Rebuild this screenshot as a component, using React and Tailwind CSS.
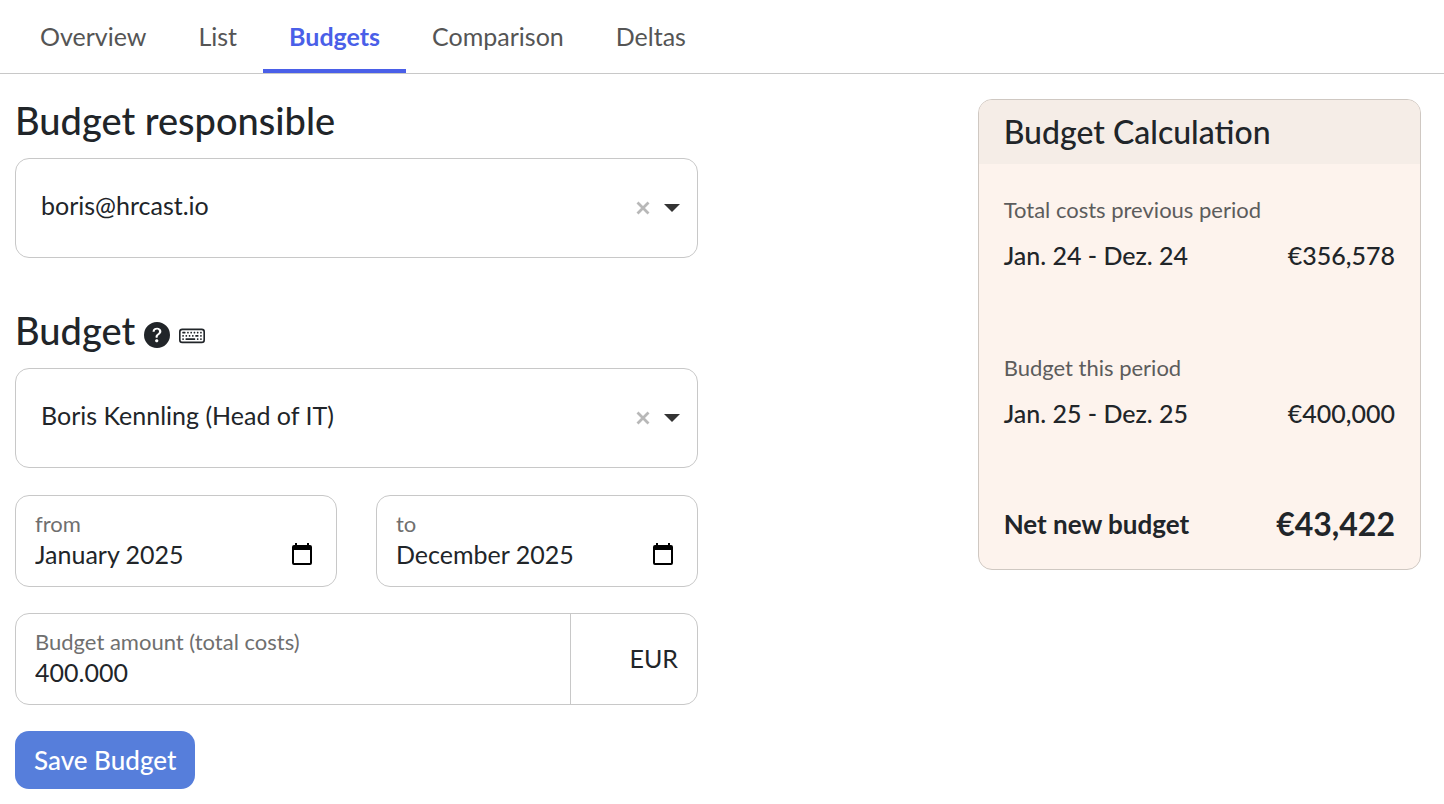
import { useState } from 'react';
import { BsQuestionCircleFill, BsKeyboard } from 'react-icons/bs';

const TABS = ['Overview', 'List', 'Budgets', 'Comparison', 'Deltas'];

const PERIODS = [
  { label: 'Total costs previous period', range: 'Jan. 24 - Dez. 24', amount: '€356,578' },
  { label: 'Budget this period', range: 'Jan. 25 - Dez. 25', amount: '€400,000' },
];

const NET_BUDGET = '€43,422';

function SelectBox({ label, options }) {
  const [value, setValue] = useState(options[0]);

  return (
    <div className="relative">
      <select
        aria-label={label}
        value={value}
        onChange={(e) => setValue(e.target.value)}
        className="block w-full h-[100px] pl-[25px] pr-20 pb-1 bg-white border border-[#c8c8c8] rounded-[14px] appearance-none"
      >
        <option value="" />
        {options.map((option) => (
          <option key={option}>{option}</option>
        ))}
      </select>
      <button
        type="button"
        aria-label="Clear"
        onClick={() => setValue('')}
        className="absolute right-12 top-1/2 -translate-y-1/2"
      >
        <svg viewBox="0 0 14 14" className="w-[14px] h-[14px]" fill="none" stroke="#b8b8b8" strokeWidth="2.8">
          <path d="M1.5 1.5l11 11M12.5 1.5l-11 11" />
        </svg>
      </button>
      <svg
        viewBox="0 0 16 8"
        className="absolute right-[18px] top-1/2 -translate-y-1/2 w-4 h-2 pointer-events-none"
        fill="#333"
      >
        <path d="M0 0h16L8 8z" />
      </svg>
    </div>
  );
}

function MonthField({ id, label, defaultValue }) {
  return (
    <div className="flex-1 min-w-0 h-[92px] px-[19px] pt-3 border border-[#c8c8c8] rounded-[14px]">
      <label htmlFor={id} className="block text-[22px] leading-8 text-[#6f6f6f]">
        {label}
      </label>
      <div className="flex items-center pr-1">
        <input id={id} type="text" defaultValue={defaultValue} className="flex-1 min-w-0 h-7 leading-7 outline-none" />
        <button type="button" aria-label={`Pick month ${label}`}>
          <svg viewBox="0 0 22 24" className="w-[22px] h-6">
            <path
              fillRule="evenodd"
              d="M4 1h2v2h10V1h2v2h1a2 2 0 0 1 2 2v16a2 2 0 0 1-2 2H3a2 2 0 0 1-2-2V5a2 2 0 0 1 2-2h1zM3 8v13h16V8z"
            />
          </svg>
        </button>
      </div>
    </div>
  );
}

export default function App() {
  const [tab, setTab] = useState('Budgets');

  return (
    <div className="min-h-screen bg-white text-[#212529] text-[25px] font-[Lato,sans-serif]">
      <nav className="flex h-[74px] pl-[14px] border-b border-[#c8c8c8]">
        {TABS.map((name) => (
          <a
            key={name}
            href="#"
            onClick={() => setTab(name)}
            className={
              name === tab
                ? 'px-[26px] pt-[18px] border-b-4 border-[#4a5fe8] text-[#4a5fe8] font-bold'
                : 'px-[26px] pt-[18px] text-[#555]'
            }
          >
            {name}
          </a>
        ))}
      </nav>

      <main className="grid grid-cols-12 pt-[25px]">
        {/* Budget form */}
        <form className="col-span-6 pl-[15px] pr-6" onSubmit={(e) => e.preventDefault()}>
          <h2 className="mb-4 text-[38px] leading-[43px] font-medium">Budget responsible</h2>
          <SelectBox label="Budget responsible" options={['boris@hrcast.io']} />

          <div className="flex items-center gap-[9px] mt-[51px] mb-4">
            <h2 className="text-[38px] leading-[43px] font-medium">Budget</h2>
            <span className="flex gap-[9px] pt-2">
              <BsQuestionCircleFill className="w-[26px] h-[26px]" />
              <BsKeyboard className="w-[26px] h-[26px]" />
            </span>
          </div>
          <SelectBox label="Budget" options={['Boris Kennling (Head of IT)']} />

          <div className="flex gap-[39px] mt-[27px]">
            <MonthField id="from" label="from" defaultValue="January 2025" />
            <MonthField id="to" label="to" defaultValue="December 2025" />
          </div>

          <div className="flex h-[92px] mt-[26px] border border-[#c8c8c8] rounded-[14px]">
            <div className="flex-1 min-w-0 px-[19px] pt-3">
              <label htmlFor="amount" className="block text-[22px] leading-8 text-[#6f6f6f]">
                Budget amount (total costs)
              </label>
              <input id="amount" type="text" defaultValue="400.000" className="block w-full h-7 leading-7 outline-none" />
            </div>
            <span className="flex items-center justify-end w-[127px] pr-[19px] border-l border-[#c8c8c8]">EUR</span>
          </div>

          <button
            type="submit"
            className="h-[58px] mt-[26px] px-[19px] bg-[#567edb] text-white text-[26px] font-medium rounded-[14px]"
          >
            Save Budget
          </button>
        </form>

        {/* Calculation summary */}
        <aside className="col-span-4 col-start-9 pl-[15px] pr-[23px]">
          <div className="border border-[#cfc8c2] rounded-[14px] bg-[#fdf3ed] overflow-hidden">
            <h3 className="px-[25px] h-16 leading-[64px] bg-[#f5ede7] text-[32px] font-medium">Budget Calculation</h3>
            <div className="px-[25px] pt-[26px] pb-[17px]">
              <div className="flex flex-col gap-[68px]">
                {PERIODS.map((period) => (
                  <div key={period.label}>
                    <p className="text-[22px] leading-[40px] text-[#5c5c5c]">{period.label}</p>
                    <p className="flex justify-between leading-[50px] font-medium">
                      <span>{period.range}</span>
                      <span>{period.amount}</span>
                    </p>
                  </div>
                ))}
              </div>
              <p className="flex items-center justify-between mt-[58px] text-[26px] leading-[56px] font-bold">
                <span>Net new budget</span>
                <span className="text-[32px]">{NET_BUDGET}</span>
              </p>
            </div>
          </div>
        </aside>
      </main>
    </div>
  );
}
